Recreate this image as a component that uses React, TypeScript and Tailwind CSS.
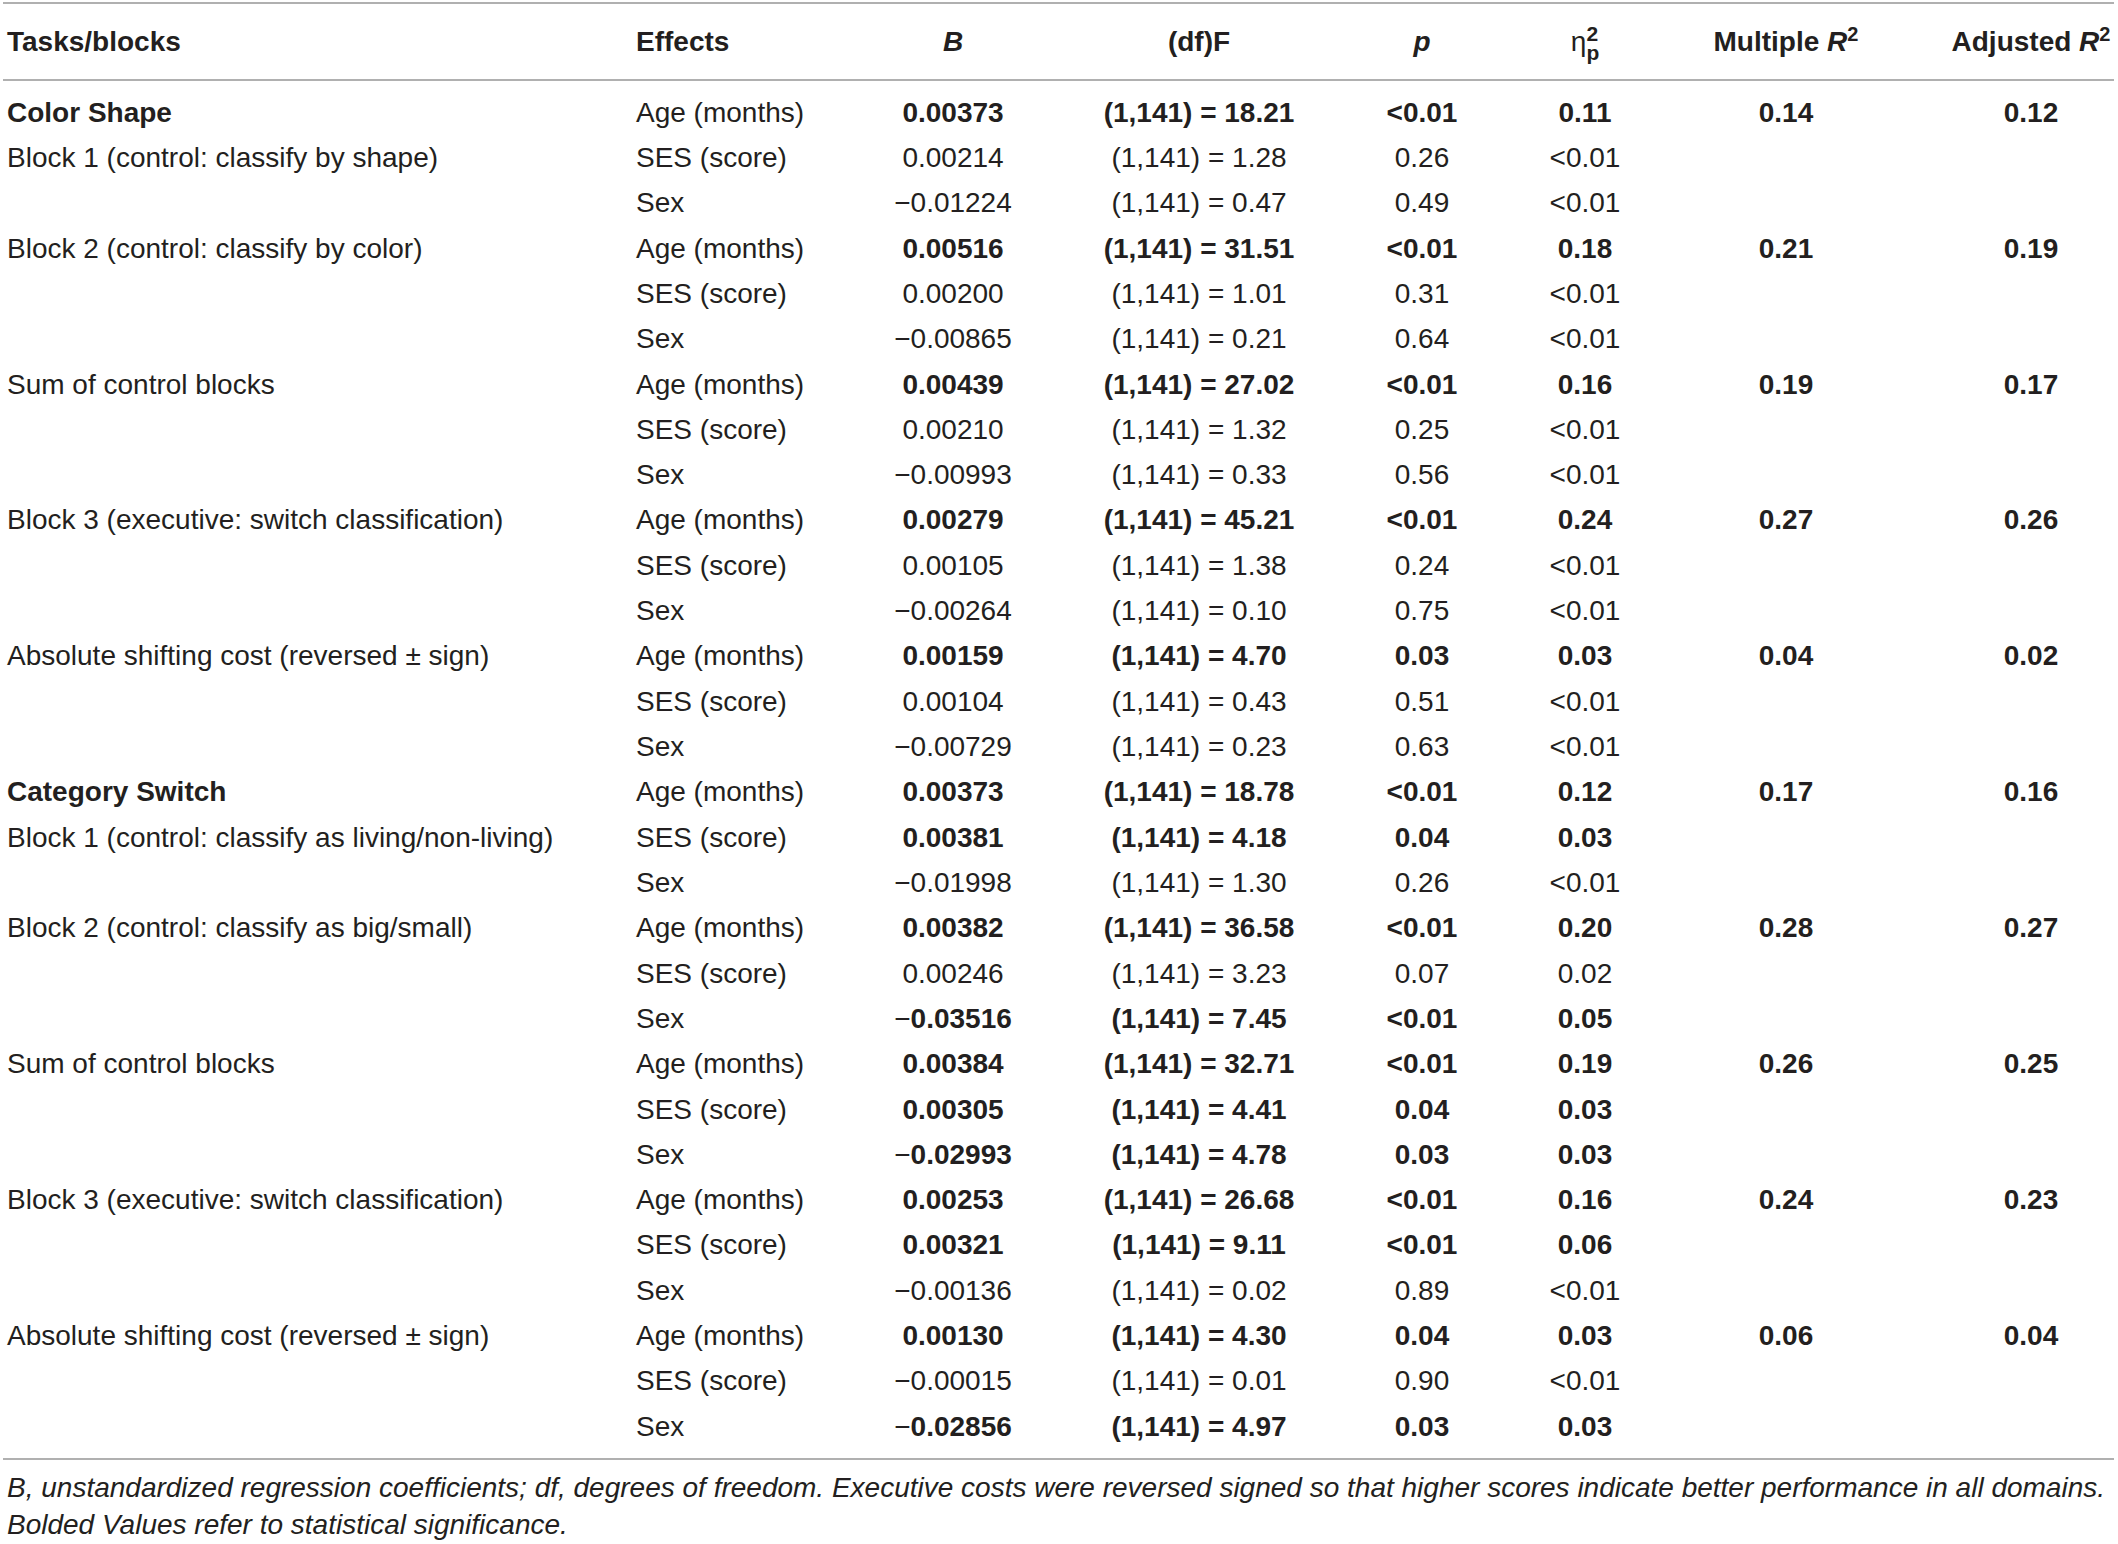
import React from 'react';

interface Row {
  task?: string;
  head?: boolean;
  effect: string;
  b: string;
  f: string;
  p: string;
  eta: string;
  mult?: string;
  adj?: string;
  sig?: boolean;
}

const AGE = 'Age (months)';
const SES = 'SES (score)';
const SEX = 'Sex';

const rows: Row[] = [
  { task: 'Color Shape', head: true, effect: AGE, b: '0.00373', f: '(1,141) = 18.21', p: '<0.01', eta: '0.11', mult: '0.14', adj: '0.12', sig: true },
  { task: 'Block 1 (control: classify by shape)', effect: SES, b: '0.00214', f: '(1,141) = 1.28', p: '0.26', eta: '<0.01' },
  { effect: SEX, b: '−0.01224', f: '(1,141) = 0.47', p: '0.49', eta: '<0.01' },
  { task: 'Block 2 (control: classify by color)', effect: AGE, b: '0.00516', f: '(1,141) = 31.51', p: '<0.01', eta: '0.18', mult: '0.21', adj: '0.19', sig: true },
  { effect: SES, b: '0.00200', f: '(1,141) = 1.01', p: '0.31', eta: '<0.01' },
  { effect: SEX, b: '−0.00865', f: '(1,141) = 0.21', p: '0.64', eta: '<0.01' },
  { task: 'Sum of control blocks', effect: AGE, b: '0.00439', f: '(1,141) = 27.02', p: '<0.01', eta: '0.16', mult: '0.19', adj: '0.17', sig: true },
  { effect: SES, b: '0.00210', f: '(1,141) = 1.32', p: '0.25', eta: '<0.01' },
  { effect: SEX, b: '−0.00993', f: '(1,141) = 0.33', p: '0.56', eta: '<0.01' },
  { task: 'Block 3 (executive: switch classification)', effect: AGE, b: '0.00279', f: '(1,141) = 45.21', p: '<0.01', eta: '0.24', mult: '0.27', adj: '0.26', sig: true },
  { effect: SES, b: '0.00105', f: '(1,141) = 1.38', p: '0.24', eta: '<0.01' },
  { effect: SEX, b: '−0.00264', f: '(1,141) = 0.10', p: '0.75', eta: '<0.01' },
  { task: 'Absolute shifting cost (reversed ± sign)', effect: AGE, b: '0.00159', f: '(1,141) = 4.70', p: '0.03', eta: '0.03', mult: '0.04', adj: '0.02', sig: true },
  { effect: SES, b: '0.00104', f: '(1,141) = 0.43', p: '0.51', eta: '<0.01' },
  { effect: SEX, b: '−0.00729', f: '(1,141) = 0.23', p: '0.63', eta: '<0.01' },
  { task: 'Category Switch', head: true, effect: AGE, b: '0.00373', f: '(1,141) = 18.78', p: '<0.01', eta: '0.12', mult: '0.17', adj: '0.16', sig: true },
  { task: 'Block 1 (control: classify as living/non-living)', effect: SES, b: '0.00381', f: '(1,141) = 4.18', p: '0.04', eta: '0.03', sig: true },
  { effect: SEX, b: '−0.01998', f: '(1,141) = 1.30', p: '0.26', eta: '<0.01' },
  { task: 'Block 2 (control: classify as big/small)', effect: AGE, b: '0.00382', f: '(1,141) = 36.58', p: '<0.01', eta: '0.20', mult: '0.28', adj: '0.27', sig: true },
  { effect: SES, b: '0.00246', f: '(1,141) = 3.23', p: '0.07', eta: '0.02' },
  { effect: SEX, b: '−0.03516', f: '(1,141) = 7.45', p: '<0.01', eta: '0.05', sig: true },
  { task: 'Sum of control blocks', effect: AGE, b: '0.00384', f: '(1,141) = 32.71', p: '<0.01', eta: '0.19', mult: '0.26', adj: '0.25', sig: true },
  { effect: SES, b: '0.00305', f: '(1,141) = 4.41', p: '0.04', eta: '0.03', sig: true },
  { effect: SEX, b: '−0.02993', f: '(1,141) = 4.78', p: '0.03', eta: '0.03', sig: true },
  { task: 'Block 3 (executive: switch classification)', effect: AGE, b: '0.00253', f: '(1,141) = 26.68', p: '<0.01', eta: '0.16', mult: '0.24', adj: '0.23', sig: true },
  { effect: SES, b: '0.00321', f: '(1,141) = 9.11', p: '<0.01', eta: '0.06', sig: true },
  { effect: SEX, b: '−0.00136', f: '(1,141) = 0.02', p: '0.89', eta: '<0.01' },
  { task: 'Absolute shifting cost (reversed ± sign)', effect: AGE, b: '0.00130', f: '(1,141) = 4.30', p: '0.04', eta: '0.03', mult: '0.06', adj: '0.04', sig: true },
  { effect: SES, b: '−0.00015', f: '(1,141) = 0.01', p: '0.90', eta: '<0.01' },
  { effect: SEX, b: '−0.02856', f: '(1,141) = 4.97', p: '0.03', eta: '0.03', sig: true },
];

const cols = 'grid grid-cols-[628px_240px_164px_328px_118px_208px_194px_234px]';

// bold values keep a light minus sign, as in the printed table
const Num: React.FC<{ v?: string; bold?: boolean }> = ({ v, bold }) => {
  if (!v) return null;
  if (bold && v.startsWith('−')) {
    return (
      <span>
        <span className="font-normal">−</span>
        <span className="font-bold">{v.slice(1)}</span>
      </span>
    );
  }
  return <span className={bold ? 'font-bold' : ''}>{v}</span>;
};

const App: React.FC = () => {
  return (
    <div className="w-[2118px] h-[1544px] bg-white text-[#231f20] font-['Liberation_Sans',Arial,sans-serif] text-[28px]">
      <div className="w-[2114px] pt-[2px] pl-[3px]">
        <div className={`${cols} h-[79px] items-center border-t-2 border-b-2 border-[#b0b0b0] font-bold`}>
          <div className="pl-[4px]">Tasks/blocks</div>
          <div className="pl-[5px]">Effects</div>
          <div className="text-center italic">B</div>
          <div className="text-center">(df)F</div>
          <div className="text-center italic">p</div>
          <div className="flex justify-center items-center">
            <span className="font-normal">η</span>
            <span className="inline-flex flex-col text-[21px] leading-[19px] mt-[2px]">
              <span>2</span>
              <span>p</span>
            </span>
          </div>
          <div className="text-center">
            Multiple <span className="italic">R</span>
            <sup className="text-[20px]">2</sup>
          </div>
          <div className="pl-[62px] text-center">
            Adjusted <span className="italic">R</span>
            <sup className="text-[20px]">2</sup>
          </div>
        </div>

        <div className="pt-[9px] pb-[9px] border-b-2 border-[#b0b0b0]">
          {rows.map((r, i) => (
            <div key={i} className={`${cols} h-[45.32px] items-center leading-none whitespace-nowrap`}>
              <div className={`pl-[4px] ${r.head ? 'font-bold' : ''}`}>{r.task}</div>
              <div className="pl-[5px]">{r.effect}</div>
              <div className="text-center"><Num v={r.b} bold={r.sig} /></div>
              <div className="text-center"><Num v={r.f} bold={r.sig} /></div>
              <div className="text-center"><Num v={r.p} bold={r.sig} /></div>
              <div className="text-center"><Num v={r.eta} bold={r.sig} /></div>
              <div className="text-center"><Num v={r.mult} bold /></div>
              <div className="pl-[62px] text-center"><Num v={r.adj} bold /></div>
            </div>
          ))}
        </div>

        <div className="pt-[9px] pl-[4px] italic leading-[37px] whitespace-nowrap">
          B, unstandardized regression coefficients; df, degrees of freedom. Executive costs were reversed signed so that higher scores indicate better performance in all domains.
          <br />
          Bolded Values refer to statistical significance.
        </div>
      </div>
    </div>
  );
};

export default App;
